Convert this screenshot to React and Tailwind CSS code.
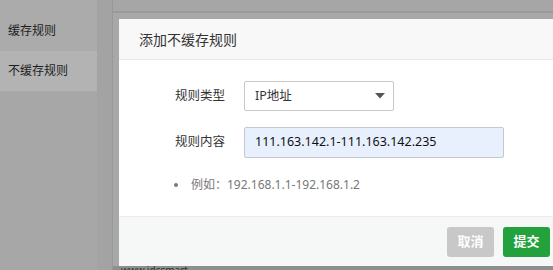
import React from 'react';

const font = { fontFamily: '"Noto Sans", "Noto Sans CJK SC", sans-serif' };

const Field = ({ label, children }) => (
  <div className="flex items-center">
    <div className="w-[125px] pl-[56px] text-[12.5px] text-[#333]">{label}</div>
    {children}
  </div>
);

const App = () => {
  return (
    <div className="relative w-[553px] h-[270px] overflow-hidden bg-[#a8a8a8]" style={font}>
      {/* dimmed page behind the dialog */}
      <div className="flex h-full">
        <div className="w-[97px] flex flex-col bg-[#a7a7a7]">
          <div className="h-[51px] flex items-center pl-2 pt-[10px] bg-[#ababab] text-[12px] text-[#1e1e1e]">缓存规则</div>
          <div className="h-[40px] flex items-center pl-2 bg-[#b3b3b3] text-[12px] text-[#1e1e1e]">不缓存规则</div>
        </div>
        <div className="w-[16px] bg-[#a3a3a3] border-r border-[#999]" />
        <div className="flex-1 flex flex-col">
          <div className="h-[13px] bg-[#a6a6a6] border-b-2 border-[#9a9a9a]" />
          <div className="flex-1" />
          <div className="h-[4px] bg-[#8f8f8f] pl-[8px] text-[10px] leading-[8px] text-[#333]">www.idcsmart</div>
        </div>
      </div>

      {/* dialog */}
      <div className="absolute left-[119px] top-[19px] w-[450px] h-[247px] bg-white flex flex-col">
        <div className="h-[41px] bg-[#f8f8f8] border-b border-[#e6e6e6] flex items-center pl-5 text-[14px] text-[#333]">
          添加不缓存规则
        </div>
        <div className="flex-1 flex flex-col pt-[21px] gap-[16px]">
          <Field label="规则类型">
            <div className="w-[150px] h-[30px] border border-[#c8c8c8] rounded-[2px] flex items-center justify-between pl-[10px] pr-[8px] text-[12.5px] text-[#333]">
              <span>IP地址</span>
              <svg width="10" height="6" viewBox="0 0 10 6">
                <path d="M0 0 H10 L5 5.5 Z" fill="#555" />
              </svg>
            </div>
          </Field>
          <Field label="规则内容">
            <div className="w-[260px] h-[31px] border border-[#c4c8cc] rounded-[2px] bg-[#e8f0fe] flex items-center pl-[10px] text-[12.5px] text-[#111]">
              111.163.142.1-111.163.142.235
            </div>
          </Field>
          <div className="flex items-center pl-[55px] pt-[2px] text-[12px] text-[#777]">
            <span className="w-[4px] h-[4px] rounded-full bg-[#777] mr-[13px]" />
            例如：192.168.1.1-192.168.1.2
          </div>
        </div>
        <div className="h-[50px] bg-[#f6f7f7] border-t border-[#ececec] flex items-center pl-[328px] gap-[9px]">
          <button className="w-[47px] h-[30px] rounded-[3px] bg-[#c8c8c8] text-white text-[13px] font-bold">取消</button>
          <button className="w-[47px] h-[30px] rounded-[3px] bg-[#22a13c] text-white text-[13px] font-bold">提交</button>
        </div>
      </div>
    </div>
  );
};

export default App;
